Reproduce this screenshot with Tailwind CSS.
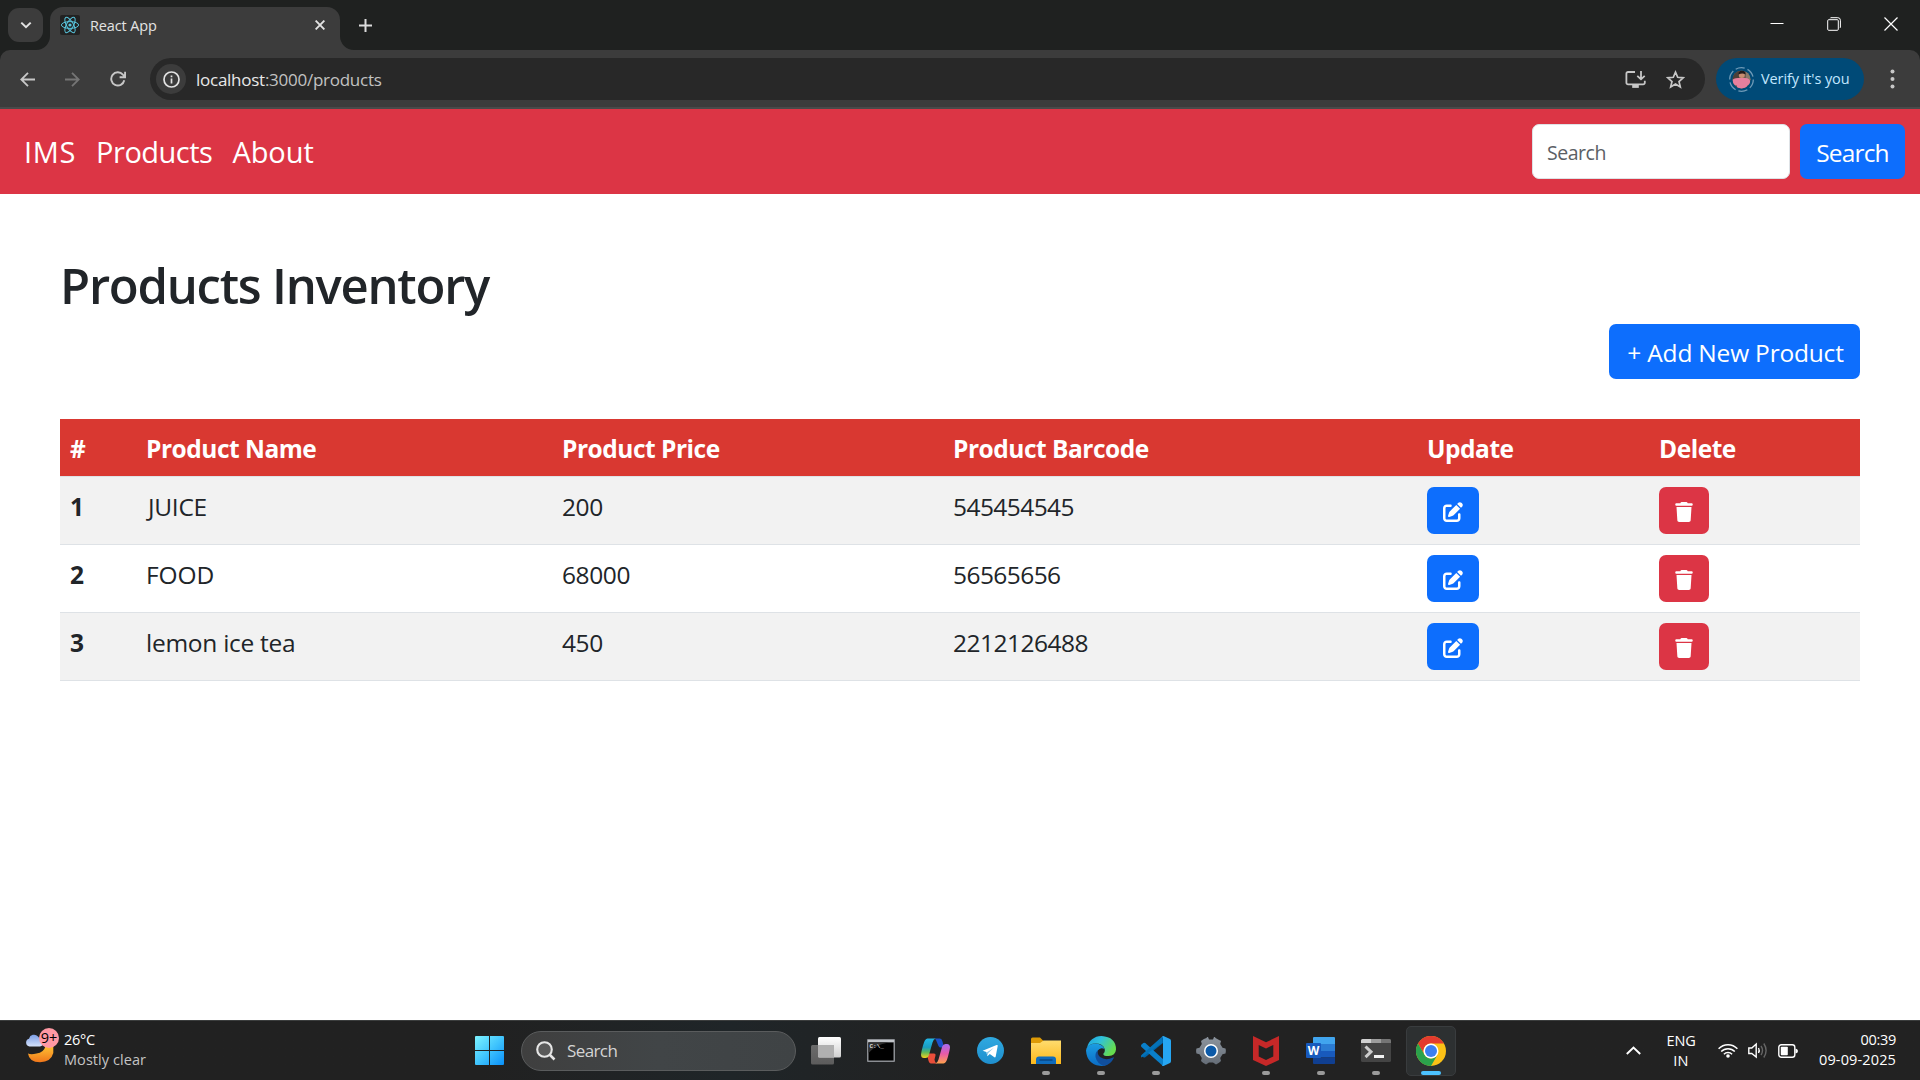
<!DOCTYPE html>
<html lang="en">
<head>
<meta charset="utf-8">
<title>React App</title>
<script src="https://cdn.jsdelivr.net/npm/@tailwindcss/browser@4"></script>
</head>
<body class="h-[1080px] w-[1920px] overflow-hidden bg-white font-['Open_Sans',sans-serif] text-[#212529]">
<svg class="absolute size-0" aria-hidden="true">
  <defs>
    <symbol id="edit" viewBox="0 0 512 512"><path fill="currentColor" d="M471.6 21.7c-21.9-21.9-57.3-21.9-79.2 0L362.3 51.7l97.9 97.9 30.1-30.1c21.9-21.9 21.9-57.3 0-79.2L471.6 21.7zm-299.2 220c-6.1 6.1-10.8 13.6-13.5 21.9l-29.6 88.8c-2.9 8.6-.6 18.1 5.8 24.6s15.9 8.7 24.6 5.8l88.8-29.6c8.2-2.7 15.7-7.4 21.9-13.5L437.7 172.3 339.7 74.3 172.4 241.7zM96 64C43 64 0 107 0 160V416c0 53 43 96 96 96H352c53 0 96-43 96-96V320c0-17.7-14.3-32-32-32s-32 14.3-32 32v96c0 17.7-14.3 32-32 32H96c-17.7 0-32-14.3-32-32V160c0-17.7 14.3-32 32-32h96c17.7 0 32-14.3 32-32s-14.3-32-32-32H96z"/></symbol>
    <symbol id="trash" viewBox="0 0 448 512"><path fill="currentColor" d="M135.2 17.7L128 32H32C14.3 32 0 46.3 0 64S14.3 96 32 96H416c17.7 0 32-14.3 32-32s-14.3-32-32-32H320l-7.2-14.3C307.4 6.8 296.3 0 284.2 0H163.8c-12.1 0-23.2 6.8-28.6 17.7zM416 128H32L53.2 467c1.6 25.3 22.6 45 47.9 45H346.9c25.3 0 46.3-19.7 47.9-45L416 128z"/></symbol>
    <linearGradient id="win" x1="0" y1="0" x2="1" y2="1"><stop offset="0" stop-color="#7df3ff"/><stop offset=".5" stop-color="#41c5fd"/><stop offset="1" stop-color="#0a90f9"/></linearGradient>
    <linearGradient id="moon" x1="0" y1="0" x2="0" y2="1"><stop offset="0" stop-color="#ffc233"/><stop offset="1" stop-color="#f0761b"/></linearGradient>
    <linearGradient id="cloud" x1="0" y1="0" x2="0" y2="1"><stop offset="0" stop-color="#7d9fe6"/><stop offset="1" stop-color="#d4e2fb"/></linearGradient>
    <linearGradient id="tv" x1="0" y1="0" x2="0" y2="1"><stop offset="0" stop-color="#ffffff"/><stop offset="1" stop-color="#d0d0d0"/></linearGradient>
    <linearGradient id="tvb" x1="0" y1="0" x2="0" y2="1"><stop offset="0" stop-color="#6b6b6b"/><stop offset="1" stop-color="#5c5c5c"/></linearGradient>
    <linearGradient id="cpl" x1="0" y1="0" x2="0" y2="1"><stop offset="0" stop-color="#22b8e8"/><stop offset=".45" stop-color="#1a9cc0"/><stop offset=".7" stop-color="#5cb85c"/><stop offset="1" stop-color="#f5d21c"/></linearGradient>
    <linearGradient id="cpr" x1="0" y1="0" x2="0" y2="1"><stop offset="0" stop-color="#a56bf0"/><stop offset=".5" stop-color="#e85aa8"/><stop offset="1" stop-color="#ffa24c"/></linearGradient>
    <linearGradient id="tg" x1="0" y1="0" x2="0" y2="1"><stop offset="0" stop-color="#2fa9e0"/><stop offset="1" stop-color="#1f8fce"/></linearGradient>
    <linearGradient id="fold" x1="0" y1="0" x2="0" y2="1"><stop offset="0" stop-color="#ffdc6e"/><stop offset="1" stop-color="#fcb81b"/></linearGradient>
    <linearGradient id="eg" x1="0" y1="0" x2="1" y2=".5"><stop offset="0" stop-color="#1aa0e0"/><stop offset=".45" stop-color="#2fc1dc"/><stop offset="1" stop-color="#66dd4f"/></linearGradient>
    <linearGradient id="eb" x1="0" y1="0" x2="0" y2="1"><stop offset="0" stop-color="#1b9de2"/><stop offset="1" stop-color="#0b6cc4"/></linearGradient>
    <linearGradient id="gear" x1="0" y1="0" x2="0" y2="1"><stop offset="0" stop-color="#8c949d"/><stop offset="1" stop-color="#656d77"/></linearGradient>
  </defs>
</svg>
<div class="flex h-full flex-col">
  <!-- Browser window -->
  <header class="flex h-[109px] shrink-0 flex-col bg-[#1f2120]">
    <div class="flex h-[50px] items-start">
      <div class="ml-2 mt-2 flex h-[34px] w-[35px] items-center justify-center rounded-[11px] bg-[#3c3c3c]">
        <svg class="size-3" viewBox="0 0 12 12" fill="none" stroke="#e3e3e3" stroke-width="2"><path d="M1.3 3.6 6 8.2l4.7-4.6"/></svg>
      </div>
      <div class="relative ml-[7px] mt-[7px] flex h-[43px] w-[290px] items-start rounded-t-[13px] bg-[#3c3c3c]">
        <svg class="absolute -left-[14px] bottom-0 size-[14px]" viewBox="0 0 14 14"><path d="M14 0v14H0A14 14 0 0 0 14 0Z" fill="#3c3c3c"/></svg>
        <svg class="absolute -right-[14px] bottom-0 size-[14px]" viewBox="0 0 14 14"><path d="M0 0v14h14A14 14 0 0 1 0 0Z" fill="#3c3c3c"/></svg>
        <svg class="ml-[10px] mt-2 size-5" viewBox="0 0 20 20" fill="none" stroke="#58c4dc"><rect width="20" height="20" rx="2" fill="#222" stroke="none"/><g stroke-width="1"><ellipse cx="10" cy="10" rx="8.6" ry="3.4"/><ellipse cx="10" cy="10" rx="8.6" ry="3.4" transform="rotate(60 10 10)"/><ellipse cx="10" cy="10" rx="8.6" ry="3.4" transform="rotate(120 10 10)"/></g><circle cx="10" cy="10" r="1.6" fill="#58c4dc" stroke="none"/></svg>
        <span class="ml-[10px] mt-[9px] text-[14.5px] leading-5 tracking-[-0.13px] text-[#e3e3e3]">React App</span>
        <svg class="ml-auto mr-[15px] mt-[13px] size-[10px]" viewBox="0 0 10 10" stroke="#e3e3e3" stroke-width="1.9"><path d="m.6.6 8.8 8.8M9.4.6.6 9.4"/></svg>
      </div>
      <svg class="ml-[19px] mt-[19px] size-[13px]" viewBox="0 0 13 13" stroke="#dcdcdc" stroke-width="2"><path d="M6.5 0v13M0 6.5h13"/></svg>
      <div class="ml-auto mt-[17px] flex items-center gap-[43px] pr-[22px]">
        <svg class="size-[14px]" viewBox="0 0 14 14" stroke="#fff"><path d="M.5 6.5H13.5"/></svg>
        <svg class="size-[14px]" viewBox="0 0 14 14" fill="none" stroke="#fff"><path d="M.7 3.7a1 1 0 0 1 1-1h8.600a1 1 0 0 1 1 1v8.600a1 1 0 0 1-1 1H1.700a1 1 0 0 1-1-1ZM3.200 1.200a1 1 0 0 1 .8-.5h6.800a2.600 2.600 0 0 1 2.600 2.600V10q0 .6-.6 1"/></svg>
        <svg class="size-[14px]" viewBox="0 0 14 14" stroke="#fff" stroke-width="1.2"><path d="m.5.5 13 13M13.5.5l-13 13"/></svg>
      </div>
    </div>
    <div class="flex h-[59px] items-start rounded-t-[10px] border-b-2 border-[#4a4a4a] bg-[#3c3c3c] pt-2">
      <div class="flex h-[42px] w-[150px] items-center pl-5">
        <svg class="size-[15px]" viewBox="0 0 15 15" fill="none" stroke="#c7c7c7" stroke-width="1.8"><path d="M15 7.5H1.4M8 .8 1.3 7.5 8 14.2"/></svg>
        <svg class="ml-[30px] size-[15px]" viewBox="0 0 15 15" fill="none" stroke="#757575" stroke-width="1.8"><path d="M0 7.5h13.6M7 .8l6.7 6.7L7 14.2"/></svg>
        <svg class="ml-[30px] size-4" viewBox="0 0 16 16" fill="none" stroke="#c7c7c7" stroke-width="1.9"><path d="M14.300 9.300A6.600 6.600 0 1 1 12.900 3.600L15 5.800M15.100.8v5.400H9.600"/></svg>
      </div>
      <div class="flex h-[42px] w-[1555px] items-center rounded-full bg-[#282828] pl-[6px] pr-5">
        <div class="flex size-[30px] items-center justify-center rounded-full bg-[#3c3c3c]">
          <svg class="size-[17px]" viewBox="0 0 17 17" fill="none" stroke="#e3e3e3" stroke-width="1.7"><circle cx="8.5" cy="8.5" r="7.5"/><path d="M8.5 7.6v4.8M8.5 4.5v1.8"/></svg>
        </div>
        <span class="ml-[10px] pt-px text-[17px] leading-[22px] tracking-[-0.26px] text-[#c2c2c2]"><span class="text-[#e8e8e8]">localhost</span>:3000/products</span>
        <svg class="ml-auto size-[21px]" viewBox="0 0 21 21" fill="none" stroke="#c7c7c7" stroke-width="1.8"><path d="M10 3H3a1.600 1.600 0 0 0-1.600 1.600v9.200A1.600 1.600 0 0 0 3 15.400h15.200a1.600 1.600 0 0 0 1.600-1.600v-2M16 2v8M12.300 6.800 16 10.300l3.700-3.500"/><path d="M7.200 16h6.600v2.900H7.200Z" fill="#c7c7c7" stroke="none"/></svg>
        <svg class="ml-5 size-[19px]" viewBox="0 0 19 19" fill="none" stroke="#c7c7c7" stroke-width="1.7"><path d="m9.500 2.200 2.200 5.100 5.500.5-4.200 3.700 1.300 5.400-4.800-2.900-4.800 2.900L6 11.500l-4.200-3.700 5.500-.5Z"/></svg>
      </div>
      <div class="ml-[11px] flex h-[42px] w-[148px] items-center rounded-full bg-[#004a77] pl-[13px]">
        <svg class="size-[25px]" viewBox="0 0 25 25"><circle cx="12.500" cy="12.500" r="11.800" fill="none" stroke="#6f9bb8" stroke-width="1.300" stroke-dasharray="9.300 3"/><clipPath id="av"><circle cx="12.500" cy="12.500" r="9"/></clipPath><g clip-path="url(#av)"><path d="M0 0h25v25H0Z" fill="#6d5d50"/><path d="M0 0h10v12H0Z" fill="#4c4039"/><path d="M17 3h6v10h-6Z" fill="#8a7a6b"/><path d="M3 14q1-3 6-3h7q5 0 6 5-1.500 3-4 2.500V25H8v-6.500q-4 0-5-4.500Z" fill="#e77f9d"/><circle cx="12.800" cy="8" r="3" fill="#c98d71"/><path d="M9.500 7.500q0-4 3.500-4t3.500 4q-3-2-7 0Z" fill="#221b1b"/></g></svg>
        <span class="ml-[7px] text-[14.5px] leading-5 tracking-[-0.09px] text-[#c2e7ff]">Verify it's you</span>
      </div>
      <svg class="ml-[26px] mt-[11px] h-5 w-[5px]" viewBox="0 0 5 20" fill="#c7c7c7"><circle cx="2.500" cy="2.500" r="2"/><circle cx="2.500" cy="10" r="2"/><circle cx="2.500" cy="17.500" r="2"/></svg>
    </div>
  </header>

  <!-- Site navigation -->
  <nav class="flex h-[85px] shrink-0 items-center bg-[#dc3545] pl-6 pr-[15px] text-white">
    <span class="text-[29px] leading-[45px] tracking-[0.66px]">IMS</span>
    <span class="ml-5 text-[29px] leading-[45px] tracking-[-0.5px]">Products</span>
    <span class="ml-5 text-[29px] leading-[45px] tracking-[-0.08px]">About</span>
    <div class="ml-auto flex h-[55px] w-[258px] items-center rounded-[7px] border border-[#dee2e6] bg-white pl-[14px] pt-[2px]"><span class="text-[19.5px] leading-[30px] tracking-[-0.48px] text-[#5b6065]">Search</span></div>
    <button class="ml-[10px] flex h-[55px] w-[105px] items-center justify-center rounded-[7px] bg-[#0d6efd] pt-[2px]"><span class="text-[24.5px] leading-[37px] tracking-[-0.85px]">Search</span></button>
  </nav>

  <!-- Page content -->
  <main class="flex grow flex-col px-[60px] pt-[55px]">
    <h1 class="h-[75px] text-[49px] leading-[72px] font-semibold tracking-[-1.24px]">Products Inventory</h1>
    <button class="ml-auto flex h-[55px] w-[251px] items-center justify-center rounded-[7px] bg-[#0d6efd] pt-[2px] pl-[2px] text-white"><span class="text-[24.5px] leading-[37px] tracking-[-0.2px]">+ Add New Product</span></button>
    <div class="mt-10 text-[24.5px] leading-[37px]">
      <div class="grid h-[58px] grid-cols-[76px_416px_391px_474px_232px_211px] border-b border-[#dee2e6] bg-[#d93831] pt-[11px] font-bold tracking-[-0.48px] text-white *:pl-[10px]">
        <div>#</div><div>Product Name</div><div>Product Price</div><div>Product Barcode</div><div>Update</div><div>Delete</div>
      </div>
      <div class="grid h-[68px] grid-cols-[76px_416px_391px_474px_232px_211px] border-b border-[#dee2e6] bg-[#f2f2f2] pt-[10px] *:pl-[10px]">
        <div class="pt-px font-bold">1</div><div class="pt-px tracking-[-0.3px]"><span class="ml-[2px]">JUICE</span></div><div class="pt-px tracking-[-0.4px]">200</div><div class="pt-px tracking-[-0.57px]">545454545</div>
        <div><button class="flex h-[47px] w-[52px] items-center justify-center rounded-[7px] bg-[#0d6efd] pt-[2px] text-white"><svg class="size-5"><use href="#edit"/></svg></button></div>
        <div><button class="flex h-[47px] w-[50px] items-center justify-center rounded-[7px] bg-[#dc3545] pt-[2px] text-white"><svg class="h-5 w-[18px]"><use href="#trash"/></svg></button></div>
      </div>
      <div class="grid h-[68px] grid-cols-[76px_416px_391px_474px_232px_211px] border-b border-[#dee2e6] bg-white pt-[10px] *:pl-[10px]">
        <div class="pt-px font-bold">2</div><div class="pt-px tracking-[-0.09px]">FOOD</div><div class="pt-px tracking-[-0.4px]">68000</div><div class="pt-px tracking-[-0.57px]">56565656</div>
        <div><button class="flex h-[47px] w-[52px] items-center justify-center rounded-[7px] bg-[#0d6efd] pt-[2px] text-white"><svg class="size-5"><use href="#edit"/></svg></button></div>
        <div><button class="flex h-[47px] w-[50px] items-center justify-center rounded-[7px] bg-[#dc3545] pt-[2px] text-white"><svg class="h-5 w-[18px]"><use href="#trash"/></svg></button></div>
      </div>
      <div class="grid h-[68px] grid-cols-[76px_416px_391px_474px_232px_211px] border-b border-[#dee2e6] bg-[#f2f2f2] pt-[10px] *:pl-[10px]">
        <div class="pt-px font-bold">3</div><div class="pt-px tracking-[-0.27px]">lemon ice tea</div><div class="pt-px tracking-[-0.4px]">450</div><div class="pt-px tracking-[-0.5px]">2212126488</div>
        <div><button class="flex h-[47px] w-[52px] items-center justify-center rounded-[7px] bg-[#0d6efd] pt-[2px] text-white"><svg class="size-5"><use href="#edit"/></svg></button></div>
        <div><button class="flex h-[47px] w-[50px] items-center justify-center rounded-[7px] bg-[#dc3545] pt-[2px] text-white"><svg class="h-5 w-[18px]"><use href="#trash"/></svg></button></div>
      </div>
    </div>
  </main>

  <!-- Desktop taskbar -->
  <footer class="flex h-[60px] shrink-0 items-center border-t border-[#3b3d3d] bg-linear-to-r from-[#212121] from-25% via-[#1f2528] via-38% to-[#222] to-50% text-[14.5px] leading-5 text-white">
    <div class="flex w-[475px] items-center pl-[25px]">
      <div class="relative -mt-3 h-[36px] w-[36px]">
        <svg class="absolute left-0 top-0 size-9" viewBox="0 0 36 36"><path d="M3 26.500Q4 35 15 35.300 26 35 28.300 26V19H20.500Q19 25.500 11.500 26.500 6 28 3 26.500Z" fill="url(#moon)"/><path d="M4.500 19.500a4 4 0 0 1-.5-7.800A5.200 5.200 0 0 1 13 9.500q2 2 2 3 3 .5 3 3.500t-3 3.500Z" fill="url(#cloud)"/></svg>
        <div class="absolute left-[14px] top-px flex size-5 items-center justify-center rounded-full bg-[#ff99a4] text-black">9+</div>
      </div>
      <div class="-mt-px ml-[3px]"><div class="tracking-[-0.26px]">26°C</div><div class="tracking-[0.06px] text-[#c4c4c4]">Mostly clear</div></div>
    </div>
    <svg class="size-[29px]" viewBox="0 0 29 29" fill="url(#win)"><path d="M1 0h13v14H0V1a1 1 0 0 1 1-1ZM15 0h13a1 1 0 0 1 1 1v13H15ZM0 15h14v14H1a1 1 0 0 1-1-1ZM15 15h14v13a1 1 0 0 1-1 1H15Z"/></svg>
    <div class="ml-[17px] flex h-10 w-[275px] items-center rounded-full border border-[#5a5c5d] bg-linear-to-r from-[#3f3f3f] via-[#414547] to-[#3f4345] pl-[14px]">
      <svg class="size-5" viewBox="0 0 20 20" fill="#5a5a5a" stroke="#e6e6e6" stroke-width="2.100"><circle cx="8.500" cy="8.500" r="7.300"/><path d="m13.500 13.500 5 5" stroke-width="2.500"/></svg>
      <span class="ml-[11px] text-[17px] leading-6 tracking-[-0.6px] text-[#d4d4d4]">Search</span>
    </div>
    <div class="ml-[2px] flex h-full">
      <div class="flex w-[55px] items-center justify-center"><svg class="size-[30px]" viewBox="0 0 30 30"><rect y="9" width="23" height="19.500" rx="1.500" fill="url(#tvb)"/><rect x="7" y="1" width="23" height="20.500" rx="1.500" fill="url(#tv)"/><path d="M7 9h16v12.500H8.500A1.500 1.500 0 0 1 7 20Z" fill="#b0b0b0"/></svg></div>
      <div class="flex w-[55px] items-center justify-center"><svg class="h-[23px] w-[28px]" viewBox="0 0 28 23"><rect width="28" height="23" rx="1" fill="#8b8e93"/><rect x="1" y="1" width="26" height="2" fill="#c2c5ca"/><rect x="1.500" y="3.500" width="25" height="18" fill="#000"/><path d="M1.500 3.500h20Q8 6 1.500 14Z" fill="#303030"/><text x="2.500" y="9" font-size="6" font-weight="700" fill="#ddd" font-family="Liberation Mono, monospace">C:\_</text></svg></div>
      <div class="flex w-[55px] items-center justify-center"><svg class="h-[26px] w-[29px]" viewBox="0 0 29 26"><path d="M19 .5h-5.500q1.500.5 2.500 4l1.500 3.500q.8 1.500 2.500 1.500h3l-1.500-6Q20.800.5 19 .5Z" fill="#1b51c8"/><path d="M10 25.500h6q-2-.5-2.500-4l1-4q.5-2-1.500-2H6l1.200 6q.8 4 2.800 4Z" fill="#ea4e3a"/><path d="M6.500.5h8q-2 .5-3 4l-3.700 13Q7 20 4.500 20H3Q0 20 0 16.500q.3-3 2-9Q3.800.5 6.500.5Z" fill="url(#cpl)"/><path d="M22.500 25.500h-8q2-.5 3-4l3.700-13Q22 6 24.500 6H26q3 0 3 3.500-.3 3-2 9-1.800 7-4.500 7Z" fill="url(#cpr)"/></svg></div>
      <div class="flex w-[55px] items-center justify-center"><svg class="size-[27px]" viewBox="0 0 27 27"><circle cx="13.500" cy="13.500" r="13.500" fill="url(#tg)"/><path d="M5.600 13.800 19.600 8q1.400-.4 1.100 1l-2 10.500q-.4 1.500-1.700.6l-4.200-3.100-2.400 2.200-1-4.200Z" fill="#fff"/><path d="m9.600 15.400 7.300-4.700-5.600 5.400-.8 2.800Z" fill="#8fc7e6"/></svg></div>
      <div class="relative flex w-[55px] items-center justify-center"><svg class="h-[27px] w-[30px]" viewBox="0 0 30 27"><path d="M1.500.5H9L12.500 4H28v6H0V2A1.500 1.500 0 0 1 1.500.5Z" fill="#dd9a06"/><path d="M0 6h9l3.500-2.500H30V27H0Z" fill="url(#fold)"/><path d="M5 27v-4.500a3 3 0 0 1 3-3h14a3 3 0 0 1 3 3V27Z" fill="#0f6cbd"/><path d="M8.500 23h13" stroke="#073f78" stroke-width="1.200"/></svg><i class="absolute bottom-[5px] h-1 w-2 rounded-full bg-[#9a9a9a]"></i></div>
      <div class="relative flex w-[55px] items-center justify-center"><svg class="size-[30px]" viewBox="0 0 30 30"><path d="M1 12A14.600 14.600 0 0 1 15.500 0Q30 1 30 13.500q-.5 6-7.500 6.500-6 0-5-2.500 2-2 1-5-2-5-9-5-6 0-8.500 4.500Z" fill="url(#eg)"/><path d="M0 14.500Q1 8 9 7.500q8 .5 9.500 5.500-1-.8-3-.8-4.500.8-5 6.300.5 8 9 11-3 .7-6 .3Q1 28 0 14.500Z" fill="url(#eb)"/><path d="M12 14.500Q9 16 9.500 21q1.500 7 9 9Q25 28 27.800 22q.3-1-.8-.5-7.500 3.500-13-.5-3-3-2-6.500Z" fill="#104f9d"/></svg><i class="absolute bottom-[5px] h-1 w-2 rounded-full bg-[#9a9a9a]"></i></div>
      <div class="relative flex w-[55px] items-center justify-center"><svg class="size-[30px]" viewBox="0 0 30 30"><path d="m.6 19.500 1.700 1.700q1 .7 2 0L22 7V.3Z" fill="#0065a9"/><path d="M.5 8.500 2.300 7q1-.6 2 .1L22 23v7L.5 11q-1-1.300 0-2.500Z" fill="#0a7fc9"/><path d="M.5 21.500q-1-1.500 0-2.500L21 .8V7Z" fill="#0472b8"/><path d="M21 .5 22.500 0 29 3q1 .5 1 2v20q0 1.500-1 2l-6.500 3q-1 .2-1.500-.8l1-1V2Z" fill="#26a6f2"/></svg><i class="absolute bottom-[5px] h-1 w-2 rounded-full bg-[#9a9a9a]"></i></div>
      <div class="flex w-[55px] items-center justify-center"><svg class="size-[30px]" viewBox="0 0 30 30"><path d="M10.500 2q.3-1.200 1.500-1l1 2.500h4l1-2.500q1.200-.2 1.500 1l4 2.300q.8 0 1.500.7l-.8 3 2.300 3.700 3 .8q.7 2 0 5l-3 .8L24.200 22l.8 3q-1.500 1.500-5 3.500l-3-2h-4l-3 2Q6.500 26.500 5 25l.8-3-2.300-3.700-3-.8q-.8-2.500 0-5l3-.8L5.800 8 5 5q3-2.300 5.500-3Z" fill="url(#gear)"/><circle cx="15" cy="15" r="7" fill="#fff"/><circle cx="15" cy="15" r="5.500" fill="#0c5aa8"/></svg></div>
      <div class="relative flex w-[55px] items-center justify-center"><svg class="h-[30px] w-[26px]" viewBox="0 0 26 30"><path d="m0 0 13 6.300L26 0v24l-13 6-13-6Zm5.700 9v11.500L13 24l7.300-3.500V9L13 12.500Z" fill="#c62828" fill-rule="evenodd"/></svg><i class="absolute bottom-[5px] h-1 w-2 rounded-full bg-[#9a9a9a]"></i></div>
      <div class="relative flex w-[55px] items-center justify-center"><svg class="h-[27px] w-[29px]" viewBox="0 0 29 27"><path d="M7 1a1 1 0 0 1 1-1h20a1 1 0 0 1 1 1v6H7Z" fill="#41a5ee"/><path d="M7 7h22v7H7Z" fill="#2b7cd3"/><path d="M7 14h22v6.500H7Z" fill="#185abd"/><path d="M7 20.500h22V26a1 1 0 0 1-1 1H8a1 1 0 0 1-1-1Z" fill="#103f91"/><rect y="6" width="15" height="15" rx="1" fill="#185abd"/><text x="7.500" y="18" text-anchor="middle" font-size="12" font-weight="700" fill="#fff" font-family="Open Sans, sans-serif">W</text></svg><i class="absolute bottom-[5px] h-1 w-2 rounded-full bg-[#9a9a9a]"></i></div>
      <div class="relative flex w-[55px] items-center justify-center"><svg class="h-[23px] w-[30px]" viewBox="0 0 30 23"><rect width="30" height="23" rx="1.500" fill="#444"/><path d="M0 4V1.500A1.500 1.500 0 0 1 1.500 0H10v4Z" fill="#d0d0d0"/><path d="M10 0h10v4H10Z" fill="#9d9d9d"/><path d="M20 0h8.500A1.500 1.500 0 0 1 30 1.500V4H20Z" fill="#757575"/><path d="m4.500 7.500 5.500 5.300-5.500 5.300" fill="none" stroke="#ccc" stroke-width="3"/><path d="M13 16h10v3H13Z" fill="#f2f2f2"/></svg><i class="absolute bottom-[5px] h-1 w-2 rounded-full bg-[#9a9a9a]"></i></div>
      <div class="relative flex w-[55px] items-center justify-center"><div class="flex h-[50px] w-[50px] items-center justify-center rounded-[5px] border border-[#393c3e] bg-[#2d3031]"><svg class="size-[30px]" viewBox="0 0 30 30"><circle cx="15" cy="15" r="15" fill="#fbc116"/><path d="M2 7.500A15 15 0 0 1 28 7.500H15a7.500 7.500 0 0 0-6.500 11.300Z" fill="#e33b2e"/><path d="M2 7.500A15 15 0 0 0 15 30l6.500-11.300a7.500 7.500 0 0 1-13 0Z" fill="#2ba24c"/><circle cx="15" cy="15" r="7.500" fill="#fff"/><circle cx="15" cy="15" r="6" fill="#3b7ff0"/></svg></div><i class="absolute bottom-[5px] h-1 w-5 rounded-full bg-[#4cc2ff]"></i></div>
    </div>
    <div class="ml-auto flex items-center">
      <svg class="h-[9px] w-[15px]" viewBox="0 0 15 9" fill="none" stroke="#fff" stroke-width="1.900"><path d="m.8 8 6.700-6.500L14.200 8"/></svg>
      <div class="ml-[19px] w-[42px] pt-px text-center"><div class="tracking-[-0.14px]">ENG</div><div class="tracking-[0.4px]">IN</div></div>
      <svg class="ml-[16px] h-[15px] w-[20px]" viewBox="0 0 20 15" fill="none" stroke="#fff" stroke-width="1.500"><path d="M.6 5.800a13 13 0 0 1 18.800 0M3.200 8.600a9.400 9.400 0 0 1 13.600 0M5.900 11.200a5.800 5.800 0 0 1 8.200 0"/><circle cx="10" cy="13" r="1.800" fill="#fff" stroke="none"/></svg>
      <svg class="ml-[10px] h-[17px] w-[20px]" viewBox="0 0 20 17" fill="none" stroke="#fff" stroke-width="1.400"><path d="M.8 6h3l4.400-4v13L3.800 11.500h-3ZM10.500 6q1.500 2.500 0 5"/><path d="M13 4q3 4.500 0 9M15.800 1.500q4.600 7 0 14" stroke="#666"/></svg>
      <svg class="ml-[10px] h-[14px] w-[20px]" viewBox="0 0 20 14" fill="none" stroke="#fff" stroke-width="1.400"><rect x=".8" y=".8" width="16" height="12.400" rx="2.500"/><rect x="2.800" y="2.800" width="7" height="8.400" rx=".8" fill="#fff" stroke="none"/><path d="M17.500 4.500q2.500.5 2.500 2.500t-2.500 2.500Z" fill="#fff" stroke="none"/></svg>
      <div class="-mt-px ml-[21px] pr-6 text-right"><div class="tracking-[-0.3px]">00:39</div><div class="tracking-[0.13px]">09-09-2025</div></div>
    </div>
  </footer>
</div>
</body>
</html>
